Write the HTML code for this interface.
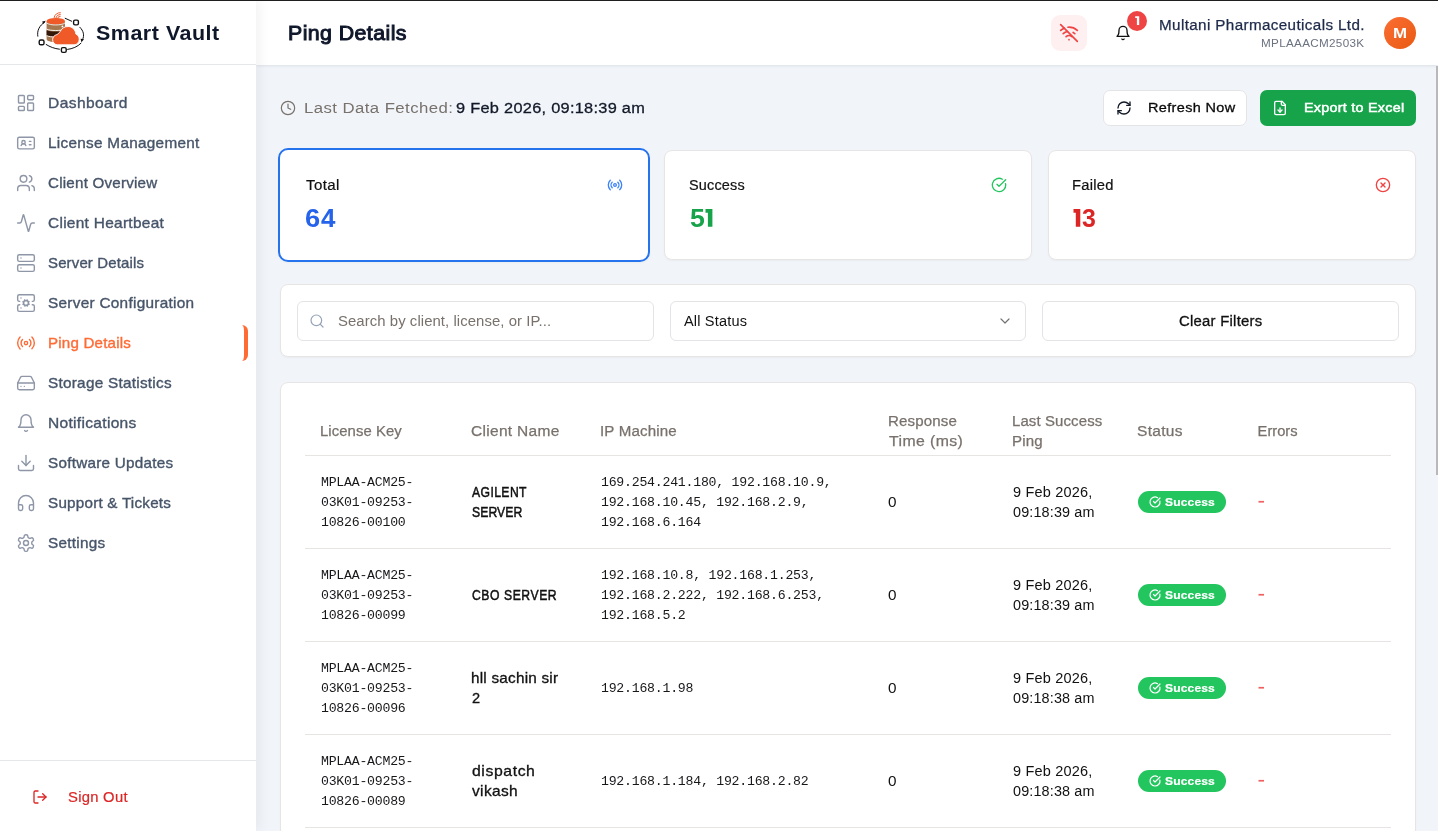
<!DOCTYPE html>
<html lang="en">
<head>
<meta charset="utf-8">
<title>Smart Vault - Ping Details</title>
<style>
*{box-sizing:border-box;margin:0;padding:0}
html,body{width:1438px;height:831px;overflow:hidden}
body{font-family:"Liberation Sans",sans-serif;background:#f1f5f9;color:#111827;position:relative}
svg{display:block;overflow:visible}
.ic{fill:none;stroke:currentColor;stroke-linecap:round;stroke-linejoin:round}
.abs{position:absolute}
.t{position:absolute;white-space:nowrap;line-height:20px}
#root{position:absolute;left:0;top:0;width:1438px;height:831px;will-change:transform}
.card{position:absolute;background:#fff;border:1px solid #e7e5e4;border-radius:8px;box-shadow:0 1px 2px rgba(0,0,0,.04)}
.inp{position:absolute;background:#fff;border:1px solid #e4e4e7;border-radius:6px}
.hl{position:absolute;height:1px;background:#e7e5e4}
</style>
</head>
<body>
<div id="root">
<div id="header" class="abs" style="left:256px;top:0;width:1182px;height:65px;background:#fff;box-shadow:0 1px 3px rgba(15,23,42,.09)"></div>
<div class="t" style="left:287.90px;top:23.07px;font-size:20px;color:#0f172a;letter-spacing:0.40px;-webkit-text-stroke:0.95px #0f172a;transform:scaleX(1.066);transform-origin:0 0">Ping Details</div>
<div class="abs" style="left:1051px;top:15px;width:36px;height:36px;border-radius:9px;background:#fef0f0"></div>
<svg class="ic" viewBox="0 0 24 24" style="position:absolute;left:1059px;top:23px;width:20px;height:20px;color:#ef4444;stroke-width:2;"><path d="M12 20h.01"/><path d="M8.5 16.429a5 5 0 0 1 7 0"/><path d="M5 12.859a10 10 0 0 1 5.17-2.69"/><path d="M19 12.859a10 10 0 0 0-2.007-1.523"/><path d="M2 8.82a15 15 0 0 1 4.177-2.643"/><path d="M22 8.82a15 15 0 0 0-11.288-3.764"/><path d="m2 2 20 20"/></svg>
<svg class="ic" viewBox="0 0 24 24" style="position:absolute;left:1114.9px;top:24.7px;width:16px;height:16px;color:#111;stroke-width:2;"><path d="M6 8a6 6 0 0 1 12 0c0 7 3 9 3 9H3s3-2 3-9"/><path d="M10.3 21a1.94 1.94 0 0 0 3.4 0"/></svg>
<div class="abs" style="left:1127px;top:10.9px;width:20px;height:20px;border-radius:50%;background:#ef4444"></div>
<div class="t" style="left:1159.14px;top:15.15px;font-size:14px;color:#1e2a4a;letter-spacing:0.35px;-webkit-text-stroke:0.25px #1e2a4a;transform:scaleX(1.086);transform-origin:0 0">Multani Pharmaceuticals Ltd.</div>
<div class="t" style="left:1261.12px;top:33.19px;font-size:11px;color:#6b7280;letter-spacing:0.30px;transform:scaleX(1.061);transform-origin:0 0">MPLAAACM2503K</div>
<div class="abs" style="left:1384px;top:17px;width:32px;height:32px;border-radius:50%;background:linear-gradient(135deg,#fb6e33,#e95a12)"></div>
<div class="t" style="left:1392.97px;top:23.35px;font-size:14px;color:#fff;letter-spacing:0.00px;font-weight:700;transform:scaleX(1.205);transform-origin:0 0">M</div>
<div id="sidebar" class="abs" style="left:0;top:0;width:256px;height:831px;background:#fff;box-shadow:3px 0 12px rgba(15,23,42,.06)"></div>
<div class="hl" style="left:0;top:64px;width:256px;background:#e5e7eb"></div>
<div class="hl" style="left:0;top:760px;width:256px;background:#e5e7eb"></div>
    <svg id="logo" class="abs" style="left:30px;top:5px;width:70px;height:55px" viewBox="30 5 70 55">
      <!-- orbit -->
      <g fill="none" stroke="#111" stroke-width="1" stroke-linecap="round">
        <path d="M44.6 22.2 C39.5 25.5 36.8 30.5 37.8 36.2"/>
        <path d="M65.2 18.3 L71.6 21.2"/>
        <path d="M79.8 27.2 C83.6 31 84.6 35.2 82.6 39.6"/>
        <path d="M81 43.2 C77.5 46.8 72.5 48.8 67.6 49.4"/>
        <path d="M59.4 49.2 C54.4 48.6 49.8 46.9 46.2 44.5"/>
      </g>
      <path d="M45.9 20.8 L43.2 24 L42.2 21.5 Z" fill="#111"/>
      <path d="M84 39.2 L81.4 42.2 L80.6 38.8 Z" fill="#111"/>
      <g fill="#fff" stroke="#111" stroke-width="1.4">
        <rect x="73.6" y="20.1" width="4.8" height="4.8" rx="1.4"/>
        <rect x="39.2" y="40" width="4.8" height="4.8" rx="1.6"/>
        <rect x="61.4" y="47.6" width="4.8" height="4.8" rx="1.4"/>
      </g>
      <!-- wifi -->
      <g fill="none" stroke="#f05a28" stroke-width="1" stroke-linecap="round">
        <path d="M54.1 17.6 A5.7 5.7 0 0 1 60.4 12.7"/>
        <path d="M55.9 18.1 A3.9 3.9 0 0 1 60.3 14.6"/>
        <path d="M57.6 18.4 A2.2 2.2 0 0 1 60.1 16.4"/>
      </g>
      <!-- cylinder -->
      <path d="M46.6 22 V39 C46.6 43.2 65 43.2 65 39 V22 Z" fill="#a67850"/>
      <path d="M46.6 30.2 C50 32 61.6 32 65 30.2 V35.4 C61.6 37.2 50 37.2 46.6 35.4 Z" fill="#33180a"/>
      <path d="M46.6 29.1 C50 31 61.6 31 65 29.1" fill="none" stroke="#fff" stroke-width=".9"/>
      <path d="M46.6 35.6 C50 37.5 61.6 37.5 65 35.6" fill="none" stroke="#fff" stroke-width=".9"/>
      <ellipse cx="55.8" cy="21.2" rx="9.2" ry="3.3" fill="#f05a28"/>
      <path d="M46.6 23 C50 25.6 61.6 25.6 65 23" fill="none" stroke="#fff" stroke-width=".8"/>
      <circle cx="62.4" cy="26.4" r=".9" fill="#fff"/>
      <!-- cloud -->
      <path d="M57.6 44.8 C54.6 44.8 52.6 42.4 52.6 39.8 C52.6 37.2 54.4 35.2 56.8 34.6 C58.2 34 59.4 32.6 60.4 31.2 C61.6 28.4 64.6 26.5 68 26.5 C72.2 26.5 75.6 29.8 75.8 34 C77.8 34.8 79.2 36.8 79.2 39.2 C79.2 42.4 77 44.8 74 44.8 Z" fill="#f05a28" stroke="#fff" stroke-width=".9"/>
    </svg>

<div class="t" style="left:95.71px;top:23.07px;font-size:20px;color:#0f172a;letter-spacing:0.49px;font-weight:700;transform:scaleX(1.072);transform-origin:0 0">Smart Vault</div>
<svg class="ic" viewBox="0 0 24 24" style="position:absolute;left:16px;top:93px;width:20px;height:20px;color:#8e96a7;stroke-width:1.7;"><rect width="7" height="9" x="3" y="3" rx="1"/><rect width="7" height="5" x="14" y="3" rx="1"/><rect width="7" height="9" x="14" y="12" rx="1"/><rect width="7" height="5" x="3" y="16" rx="1"/></svg>
<div class="t" style="left:47.65px;top:92.98px;font-size:14.5px;color:#475569;letter-spacing:0.39px;-webkit-text-stroke:0.35px #475569;transform:scaleX(1.072);transform-origin:0 0">Dashboard</div>
<svg class="ic" viewBox="0 0 24 24" style="position:absolute;left:16px;top:133px;width:20px;height:20px;color:#8e96a7;stroke-width:1.7;"><path d="M16 10h2"/><path d="M16 14h2"/><path d="M6.17 15a3 3 0 0 1 5.66 0"/><circle cx="9" cy="11" r="2"/><rect x="2" y="5" width="20" height="14" rx="2"/></svg>
<div class="t" style="left:47.67px;top:132.98px;font-size:14.5px;color:#475569;letter-spacing:0.28px;-webkit-text-stroke:0.35px #475569;transform:scaleX(1.055);transform-origin:0 0">License Management</div>
<svg class="ic" viewBox="0 0 24 24" style="position:absolute;left:16px;top:173px;width:20px;height:20px;color:#8e96a7;stroke-width:1.7;"><path d="M16 21v-2a4 4 0 0 0-4-4H6a4 4 0 0 0-4 4v2"/><circle cx="9" cy="7" r="4"/><path d="M22 21v-2a4 4 0 0 0-3-3.87"/><path d="M16 3.13a4 4 0 0 1 0 7.75"/></svg>
<div class="t" style="left:47.97px;top:172.98px;font-size:14.5px;color:#475569;letter-spacing:0.21px;-webkit-text-stroke:0.35px #475569;transform:scaleX(1.045);transform-origin:0 0">Client Overview</div>
<svg class="ic" viewBox="0 0 24 24" style="position:absolute;left:16px;top:213px;width:20px;height:20px;color:#8e96a7;stroke-width:1.7;"><path d="M22 12h-2.48a2 2 0 0 0-1.93 1.46l-2.35 8.36a.25.25 0 0 1-.48 0L9.24 2.18a.25.25 0 0 0-.48 0l-2.35 8.36A2 2 0 0 1 4.49 12H2"/></svg>
<div class="t" style="left:47.96px;top:212.98px;font-size:14.5px;color:#475569;letter-spacing:0.28px;-webkit-text-stroke:0.35px #475569;transform:scaleX(1.063);transform-origin:0 0">Client Heartbeat</div>
<svg class="ic" viewBox="0 0 24 24" style="position:absolute;left:16px;top:253px;width:20px;height:20px;color:#8e96a7;stroke-width:1.7;"><rect width="20" height="8" x="2" y="2" rx="2" ry="2"/><rect width="20" height="8" x="2" y="14" rx="2" ry="2"/><line x1="6" x2="6.01" y1="6" y2="6"/><line x1="6" x2="6.01" y1="18" y2="18"/></svg>
<div class="t" style="left:47.98px;top:252.98px;font-size:14.5px;color:#475569;letter-spacing:0.15px;-webkit-text-stroke:0.35px #475569;transform:scaleX(1.032);transform-origin:0 0">Server Details</div>
<svg class="ic" viewBox="0 0 24 24" style="position:absolute;left:16px;top:293px;width:20px;height:20px;color:#8e96a7;stroke-width:1.7;"><circle cx="12" cy="12" r="3"/><path d="M4.5 10H4a2 2 0 0 1-2-2V4a2 2 0 0 1 2-2h16a2 2 0 0 1 2 2v4a2 2 0 0 1-2 2h-.5"/><path d="M4.5 14H4a2 2 0 0 0-2 2v4a2 2 0 0 0 2 2h16a2 2 0 0 0 2-2v-4a2 2 0 0 0-2-2h-.5"/><path d="M6 6h.01"/><path d="M6 18h.01"/><path d="m15.7 13.4-.9-.3"/><path d="m9.2 10.9-.9-.3"/><path d="m10.6 15.7.3-.9"/><path d="m13.6 15.7-.4-1"/><path d="m10.8 9.3-.4-1"/><path d="m8.3 13.6 1-.4"/><path d="m14.7 10.8 1-.4"/><path d="m13.4 8.3-.3.9"/></svg>
<div class="t" style="left:47.96px;top:292.98px;font-size:14.5px;color:#475569;letter-spacing:0.26px;-webkit-text-stroke:0.35px #475569;transform:scaleX(1.059);transform-origin:0 0">Server Configuration</div>
<div class="abs" style="left:8px;top:325px;width:240px;height:36px;border-right:4px solid #ff6b35;border-radius:0 6px 6px 0"></div>
<svg class="ic" viewBox="0 0 24 24" style="position:absolute;left:16px;top:333px;width:20px;height:20px;color:#ff6b35;stroke-width:1.7;"><path d="M4.9 19.1C1 15.2 1 8.8 4.9 4.9"/><path d="M7.8 16.2c-2.3-2.3-2.3-6.1 0-8.5"/><circle cx="12" cy="12" r="2"/><path d="M16.2 7.8c2.3 2.3 2.3 6.1 0 8.5"/><path d="M19.1 4.9C23 8.8 23 15.1 19.1 19"/></svg>
<div class="t" style="left:47.68px;top:332.98px;font-size:14.5px;color:#ff6b35;letter-spacing:0.19px;-webkit-text-stroke:0.35px #ff6b35;transform:scaleX(1.043);transform-origin:0 0">Ping Details</div>
<svg class="ic" viewBox="0 0 24 24" style="position:absolute;left:16px;top:373px;width:20px;height:20px;color:#8e96a7;stroke-width:1.7;"><line x1="22" x2="2" y1="12" y2="12"/><path d="M5.45 5.11 2 12v6a2 2 0 0 0 2 2h16a2 2 0 0 0 2-2v-6l-3.45-6.89A2 2 0 0 0 16.76 4H7.24a2 2 0 0 0-1.79 1.11z"/><line x1="6" x2="6.01" y1="16" y2="16"/><line x1="10" x2="10.01" y1="16" y2="16"/></svg>
<div class="t" style="left:47.97px;top:372.98px;font-size:14.5px;color:#475569;letter-spacing:0.24px;-webkit-text-stroke:0.35px #475569;transform:scaleX(1.057);transform-origin:0 0">Storage Statistics</div>
<svg class="ic" viewBox="0 0 24 24" style="position:absolute;left:16px;top:413px;width:20px;height:20px;color:#8e96a7;stroke-width:1.7;"><path d="M6 8a6 6 0 0 1 12 0c0 7 3 9 3 9H3s3-2 3-9"/><path d="M10.3 21a1.94 1.94 0 0 0 3.4 0"/></svg>
<div class="t" style="left:47.65px;top:412.98px;font-size:14.5px;color:#475569;letter-spacing:0.29px;-webkit-text-stroke:0.35px #475569;transform:scaleX(1.071);transform-origin:0 0">Notifications</div>
<svg class="ic" viewBox="0 0 24 24" style="position:absolute;left:16px;top:453px;width:20px;height:20px;color:#8e96a7;stroke-width:1.7;"><path d="M21 15v4a2 2 0 0 1-2 2H5a2 2 0 0 1-2-2v-4"/><polyline points="7 10 12 15 17 10"/><line x1="12" x2="12" y1="15" y2="3"/></svg>
<div class="t" style="left:47.97px;top:452.98px;font-size:14.5px;color:#475569;letter-spacing:0.25px;-webkit-text-stroke:0.35px #475569;transform:scaleX(1.051);transform-origin:0 0">Software Updates</div>
<svg class="ic" viewBox="0 0 24 24" style="position:absolute;left:16px;top:493px;width:20px;height:20px;color:#8e96a7;stroke-width:1.7;"><path d="M3 14h3a2 2 0 0 1 2 2v3a2 2 0 0 1-2 2H5a2 2 0 0 1-2-2v-7a9 9 0 0 1 18 0v7a2 2 0 0 1-2 2h-1a2 2 0 0 1-2-2v-3a2 2 0 0 1 2-2h3"/></svg>
<div class="t" style="left:47.97px;top:492.98px;font-size:14.5px;color:#475569;letter-spacing:0.22px;-webkit-text-stroke:0.35px #475569;transform:scaleX(1.049);transform-origin:0 0">Support &amp; Tickets</div>
<svg class="ic" viewBox="0 0 24 24" style="position:absolute;left:16px;top:533px;width:20px;height:20px;color:#8e96a7;stroke-width:1.7;"><path d="M12.22 2h-.44a2 2 0 0 0-2 2v.18a2 2 0 0 1-1 1.73l-.43.25a2 2 0 0 1-2 0l-.15-.08a2 2 0 0 0-2.73.73l-.22.38a2 2 0 0 0 .73 2.73l.15.1a2 2 0 0 1 1 1.72v.51a2 2 0 0 1-1 1.74l-.15.09a2 2 0 0 0-.73 2.73l.22.38a2 2 0 0 0 2.73.73l.15-.08a2 2 0 0 1 2 0l.43.25a2 2 0 0 1 1 1.73V20a2 2 0 0 0 2 2h.44a2 2 0 0 0 2-2v-.18a2 2 0 0 1 1-1.73l.43-.25a2 2 0 0 1 2 0l.15.08a2 2 0 0 0 2.73-.73l.22-.39a2 2 0 0 0-.73-2.73l-.15-.08a2 2 0 0 1-1-1.74v-.5a2 2 0 0 1 1-1.74l.15-.09a2 2 0 0 0 .73-2.73l-.22-.38a2 2 0 0 0-2.73-.73l-.15.08a2 2 0 0 1-2 0l-.43-.25a2 2 0 0 1-1-1.73V4a2 2 0 0 0-2-2z"/><circle cx="12" cy="12" r="3"/></svg>
<div class="t" style="left:47.97px;top:532.98px;font-size:14.5px;color:#475569;letter-spacing:0.26px;-webkit-text-stroke:0.35px #475569;transform:scaleX(1.055);transform-origin:0 0">Settings</div>
<svg class="ic" viewBox="0 0 24 24" style="position:absolute;left:31.8px;top:788.5px;width:16px;height:16px;color:#dc2626;stroke-width:2;"><path d="M9 21H5a2 2 0 0 1-2-2V5a2 2 0 0 1 2-2h4"/><polyline points="16 17 21 12 16 7"/><line x1="21" x2="9" y1="12" y2="12"/></svg>
<div class="t" style="left:67.77px;top:787.15px;font-size:14px;color:#dc2626;letter-spacing:0.27px;-webkit-text-stroke:0.2px #dc2626;transform:scaleX(1.056);transform-origin:0 0">Sign Out</div>
<svg class="ic" viewBox="0 0 24 24" style="position:absolute;left:280px;top:100px;width:16px;height:16px;color:#78716c;stroke-width:1.8;"><circle cx="12" cy="12" r="10"/><polyline points="12 6 12 12 16 14"/></svg>
<div class="t" style="left:303.56px;top:97.63px;font-size:15.5px;color:#78716c;letter-spacing:0.39px;transform:scaleX(1.082);transform-origin:0 0">Last Data Fetched:</div>
<div class="t" style="left:456.03px;top:97.63px;font-size:15.5px;color:#111827;letter-spacing:0.27px;-webkit-text-stroke:0.3px #111827;transform:scaleX(1.054);transform-origin:0 0">9 Feb 2026, 09:18:39 am</div>
<div class="abs" style="left:1103px;top:90px;width:144px;height:36px;border:1px solid #e4e4e7;border-radius:7px;background:#fff"></div>
<svg class="ic" viewBox="0 0 24 24" style="position:absolute;left:1116px;top:100px;width:16px;height:16px;color:#111827;stroke-width:2;"><path d="M3 12a9 9 0 0 1 9-9 9.75 9.75 0 0 1 6.74 2.74L21 8"/><path d="M21 3v5h-5"/><path d="M21 12a9 9 0 0 1-9 9 9.75 9.75 0 0 1-6.74-2.74L3 16"/><path d="M8 16H3v5"/></svg>
<div class="t" style="left:1147.68px;top:98.42px;font-size:13.5px;color:#0a0a0a;letter-spacing:0.34px;-webkit-text-stroke:0.3px #0a0a0a;transform:scaleX(1.070);transform-origin:0 0">Refresh Now</div>
<div class="abs" style="left:1260px;top:90px;width:156px;height:36px;border-radius:7px;background:#16a34a"></div>
<svg class="ic" viewBox="0 0 24 24" style="position:absolute;left:1272px;top:99.5px;width:16px;height:16px;color:#fff;stroke-width:2;"><path d="M15 2H6a2 2 0 0 0-2 2v16a2 2 0 0 0 2 2h12a2 2 0 0 0 2-2V7Z"/><path d="M14 2v4a2 2 0 0 0 2 2h4"/><path d="M12 18v-6"/><path d="m9 15 3 3 3-3"/></svg>
<div class="t" style="left:1303.76px;top:98.42px;font-size:13.5px;color:#fff;letter-spacing:0.25px;-webkit-text-stroke:0.5px #fff;transform:scaleX(1.062);transform-origin:0 0">Export to Excel</div>
<div class="card" style="left:278px;top:148px;width:372px;height:114px;border:2px solid #2673ee;border-radius:10px"></div>
<div class="card" style="left:664px;top:150px;width:368px;height:110px"></div>
<div class="card" style="left:1048px;top:150px;width:368px;height:110px"></div>
<svg class="abs" style="left:0;top:0;width:1438px;height:831px;pointer-events:none" viewBox="0 0 1438 831"><polygon fill="#fff" points="1135.2,16.2 1139.2,16.2 1139.2,24.9 1136.9,24.9 1136.9,18 1135.2,18"/></svg>
<div class="t" style="left:305.65px;top:175.15px;font-size:14px;color:#111;letter-spacing:0.34px;-webkit-text-stroke:0.2px #111;transform:scaleX(1.076);transform-origin:0 0">Total</div>
<div class="t" style="left:688.59px;top:175.15px;font-size:14px;color:#111;letter-spacing:0.17px;-webkit-text-stroke:0.2px #111;transform:scaleX(1.031);transform-origin:0 0">Success</div>
<div class="t" style="left:1072.46px;top:175.15px;font-size:14px;color:#111;letter-spacing:0.24px;-webkit-text-stroke:0.2px #111;transform:scaleX(1.052);transform-origin:0 0">Failed</div>
<div class="t" style="left:305.17px;top:208.34px;font-size:25px;color:#2563eb;letter-spacing:0.00px;font-weight:700;transform:scaleX(1.090);transform-origin:0 0">6</div>
<div class="t" style="left:321.21px;top:208.34px;font-size:25px;color:#2563eb;letter-spacing:0.00px;font-weight:700;transform:scaleX(1.037);transform-origin:0 0">4</div>
<div class="t" style="left:689.59px;top:208.34px;font-size:25px;color:#16a34a;letter-spacing:0.00px;font-weight:700;transform:scaleX(1.069);transform-origin:0 0">5</div>
<div class="t" style="left:1082.29px;top:208.34px;font-size:25px;color:#dc2626;letter-spacing:0.00px;font-weight:700;transform:scaleX(0.997);transform-origin:0 0">3</div>
<svg class="abs" style="left:0;top:0;width:1438px;height:831px;pointer-events:none" viewBox="0 0 1438 831"><polygon fill="#16a34a" points="705.5,209.1 712.4,209.1 712.4,226.8 707.9,226.8 707.9,212.8 705.5,212.8"/></svg>
<svg class="abs" style="left:0;top:0;width:1438px;height:831px;pointer-events:none" viewBox="0 0 1438 831"><polygon fill="#dc2626" points="1073.5,209.1 1080.3,209.1 1080.3,226.8 1075.8,226.8 1075.8,212.8 1073.5,212.8"/></svg>
<svg class="ic" viewBox="0 0 24 24" style="position:absolute;left:607px;top:177.2px;width:16px;height:16px;color:#3b82f6;stroke-width:2;"><path d="M4.9 19.1C1 15.2 1 8.8 4.9 4.9"/><path d="M7.8 16.2c-2.3-2.3-2.3-6.1 0-8.5"/><circle cx="12" cy="12" r="2"/><path d="M16.2 7.8c2.3 2.3 2.3 6.1 0 8.5"/><path d="M19.1 4.9C23 8.8 23 15.1 19.1 19"/></svg>
<svg class="ic" viewBox="0 0 24 24" style="position:absolute;left:991px;top:176.6px;width:16px;height:16px;color:#22c55e;stroke-width:2;"><path d="M21.801 10A10 10 0 1 1 17 3.335"/><path d="m9 11 3 3L22 4"/></svg>
<svg class="ic" viewBox="0 0 24 24" style="position:absolute;left:1375px;top:177.2px;width:16px;height:16px;color:#ef4444;stroke-width:2;"><circle cx="12" cy="12" r="10"/><path d="m15 9-6 6"/><path d="m9 9 6 6"/></svg>
<div class="card" style="left:280px;top:284px;width:1136px;height:73px"></div>
<div class="inp" style="left:297px;top:301px;width:356.5px;height:40px"></div>
<div class="inp" style="left:670px;top:301px;width:356px;height:40px"></div>
<div class="inp" style="left:1042.4px;top:301px;width:356.4px;height:40px"></div>
<svg class="ic" viewBox="0 0 24 24" style="position:absolute;left:308.7px;top:313.3px;width:16px;height:16px;color:#94a3b8;stroke-width:1.8;"><circle cx="11" cy="11" r="8"/><path d="m21 21-4.3-4.3"/></svg>
<div class="t" style="left:337.50px;top:311.41px;font-size:14.7px;color:#78716c;letter-spacing:0.06px;transform:scaleX(1.015);transform-origin:0 0">Search by client, license, or IP...</div>
<div class="t" style="left:683.54px;top:311.15px;font-size:14px;color:#111;letter-spacing:0.16px;transform:scaleX(1.039);transform-origin:0 0">All Status</div>
<svg class="ic" viewBox="0 0 24 24" style="position:absolute;left:997px;top:313.1px;width:16px;height:16px;color:#737373;stroke-width:1.8;"><path d="m6 9 6 6 6-6"/></svg>
<div class="t" style="left:1178.85px;top:311.15px;font-size:14px;color:#111;letter-spacing:0.24px;-webkit-text-stroke:0.3px #111;transform:scaleX(1.062);transform-origin:0 0">Clear Filters</div>
<div class="card" style="left:280px;top:382px;width:1136px;height:470px"></div>
<div class="hl" style="left:305px;top:455px;width:1086px"></div>
<div class="t" style="left:320.48px;top:420.91px;font-size:14.7px;color:#78716c;letter-spacing:0.07px;-webkit-text-stroke:0.25px #78716c;transform:scaleX(1.013);transform-origin:0 0">License Key</div>
<div class="t" style="left:471.31px;top:420.91px;font-size:14.7px;color:#78716c;letter-spacing:0.28px;-webkit-text-stroke:0.25px #78716c;transform:scaleX(1.056);transform-origin:0 0">Client Name</div>
<div class="t" style="left:600.22px;top:420.91px;font-size:14.7px;color:#78716c;letter-spacing:0.15px;-webkit-text-stroke:0.25px #78716c;transform:scaleX(1.029);transform-origin:0 0">IP Machine</div>
<div class="t" style="left:887.67px;top:410.91px;font-size:14.7px;color:#78716c;letter-spacing:0.15px;-webkit-text-stroke:0.25px #78716c;transform:scaleX(1.026);transform-origin:0 0">Response</div>
<div class="t" style="left:888.65px;top:430.91px;font-size:14.7px;color:#78716c;letter-spacing:0.38px;-webkit-text-stroke:0.25px #78716c;transform:scaleX(1.076);transform-origin:0 0">Time (ms)</div>
<div class="t" style="left:1012.48px;top:410.91px;font-size:14.7px;color:#78716c;letter-spacing:0.10px;-webkit-text-stroke:0.25px #78716c;transform:scaleX(1.020);transform-origin:0 0">Last Success</div>
<div class="t" style="left:1012.47px;top:430.91px;font-size:14.7px;color:#78716c;letter-spacing:0.17px;-webkit-text-stroke:0.25px #78716c;transform:scaleX(1.027);transform-origin:0 0">Ping</div>
<div class="t" style="left:1137.18px;top:420.91px;font-size:14.7px;color:#78716c;letter-spacing:0.29px;-webkit-text-stroke:0.25px #78716c;transform:scaleX(1.056);transform-origin:0 0">Status</div>
<div class="t" style="left:1257.59px;top:420.91px;font-size:14.7px;color:#78716c;letter-spacing:0.01px;-webkit-text-stroke:0.25px #78716c">Errors</div>
<div class="hl" style="left:305px;top:548px;width:1086px"></div>
<div class="t" style="left:321.00px;top:473.49px;font-size:13.2px;color:#18181b;letter-spacing:-0.23px;font-family:'Liberation Mono',monospace">MPLAA-ACM25-</div>
<div class="t" style="left:321.00px;top:493.49px;font-size:13.2px;color:#18181b;letter-spacing:-0.23px;font-family:'Liberation Mono',monospace">03K01-09253-</div>
<div class="t" style="left:321.00px;top:513.49px;font-size:13.2px;color:#18181b;letter-spacing:-0.23px;font-family:'Liberation Mono',monospace">10826-00100</div>
<div class="t" style="left:472.43px;top:481.98px;font-size:14.5px;color:#111;letter-spacing:0.48px;-webkit-text-stroke:0.5px #111;transform:scaleX(0.840);transform-origin:0 0">AGILENT</div>
<div class="t" style="left:471.84px;top:501.98px;font-size:14.5px;color:#111;letter-spacing:0.10px;-webkit-text-stroke:0.5px #111;transform:scaleX(0.840);transform-origin:0 0">SERVER</div>
<div class="t" style="left:601.00px;top:473.49px;font-size:13.2px;color:#18181b;letter-spacing:-0.23px;font-family:'Liberation Mono',monospace">169.254.241.180, 192.168.10.9,</div>
<div class="t" style="left:601.00px;top:493.49px;font-size:13.2px;color:#18181b;letter-spacing:-0.23px;font-family:'Liberation Mono',monospace">192.168.10.45, 192.168.2.9,</div>
<div class="t" style="left:601.00px;top:513.49px;font-size:13.2px;color:#18181b;letter-spacing:-0.23px;font-family:'Liberation Mono',monospace">192.168.6.164</div>
<div class="t" style="left:888.26px;top:491.98px;font-size:14.5px;color:#111;letter-spacing:0.00px;transform:scaleX(1.054);transform-origin:0 0">0</div>
<div class="t" style="left:1012.74px;top:482.15px;font-size:14px;color:#111;letter-spacing:0.17px;transform:scaleX(1.036);transform-origin:0 0">9 Feb 2026,</div>
<div class="t" style="left:1012.88px;top:502.15px;font-size:14px;color:#111;letter-spacing:0.14px;transform:scaleX(1.028);transform-origin:0 0">09:18:39 am</div>
<div class="abs" style="left:1138px;top:491px;width:88px;height:22px;border-radius:11px;background:#22c55e"></div>
<svg class="ic" viewBox="0 0 24 24" style="position:absolute;left:1148.7px;top:495.8px;width:12px;height:12px;color:#fff;stroke-width:2.4;"><path d="M21.801 10A10 10 0 1 1 17 3.335"/><path d="m9 11 3 3L22 4"/></svg>
<div class="t" style="left:1164.91px;top:491.95px;font-size:11.7px;color:#fff;letter-spacing:0.15px;font-weight:700;-webkit-text-stroke:0.2px #fff;transform:scaleX(1.030);transform-origin:0 0">Success</div>
<svg class="abs" style="left:1250px;top:497px;width:20px;height:10px" viewBox="0 0 20 10"><rect x="8.5" y="3.9" width="5.5" height="1.7" fill="#ef6060"/></svg>
<div class="hl" style="left:305px;top:641px;width:1086px"></div>
<div class="t" style="left:321.00px;top:566.49px;font-size:13.2px;color:#18181b;letter-spacing:-0.23px;font-family:'Liberation Mono',monospace">MPLAA-ACM25-</div>
<div class="t" style="left:321.00px;top:586.49px;font-size:13.2px;color:#18181b;letter-spacing:-0.23px;font-family:'Liberation Mono',monospace">03K01-09253-</div>
<div class="t" style="left:321.00px;top:606.49px;font-size:13.2px;color:#18181b;letter-spacing:-0.23px;font-family:'Liberation Mono',monospace">10826-00099</div>
<div class="t" style="left:471.86px;top:584.98px;font-size:14.5px;color:#111;letter-spacing:0.66px;-webkit-text-stroke:0.5px #111;transform:scaleX(0.840);transform-origin:0 0">CBO SERVER</div>
<div class="t" style="left:601.00px;top:566.49px;font-size:13.2px;color:#18181b;letter-spacing:-0.23px;font-family:'Liberation Mono',monospace">192.168.10.8, 192.168.1.253,</div>
<div class="t" style="left:601.00px;top:586.49px;font-size:13.2px;color:#18181b;letter-spacing:-0.23px;font-family:'Liberation Mono',monospace">192.168.2.222, 192.168.6.253,</div>
<div class="t" style="left:601.00px;top:606.49px;font-size:13.2px;color:#18181b;letter-spacing:-0.23px;font-family:'Liberation Mono',monospace">192.168.5.2</div>
<div class="t" style="left:888.26px;top:584.98px;font-size:14.5px;color:#111;letter-spacing:0.00px;transform:scaleX(1.054);transform-origin:0 0">0</div>
<div class="t" style="left:1012.74px;top:575.15px;font-size:14px;color:#111;letter-spacing:0.17px;transform:scaleX(1.036);transform-origin:0 0">9 Feb 2026,</div>
<div class="t" style="left:1012.88px;top:595.15px;font-size:14px;color:#111;letter-spacing:0.14px;transform:scaleX(1.028);transform-origin:0 0">09:18:39 am</div>
<div class="abs" style="left:1138px;top:584px;width:88px;height:22px;border-radius:11px;background:#22c55e"></div>
<svg class="ic" viewBox="0 0 24 24" style="position:absolute;left:1148.7px;top:588.8px;width:12px;height:12px;color:#fff;stroke-width:2.4;"><path d="M21.801 10A10 10 0 1 1 17 3.335"/><path d="m9 11 3 3L22 4"/></svg>
<div class="t" style="left:1164.91px;top:584.95px;font-size:11.7px;color:#fff;letter-spacing:0.15px;font-weight:700;-webkit-text-stroke:0.2px #fff;transform:scaleX(1.030);transform-origin:0 0">Success</div>
<svg class="abs" style="left:1250px;top:590px;width:20px;height:10px" viewBox="0 0 20 10"><rect x="8.5" y="3.9" width="5.5" height="1.7" fill="#ef6060"/></svg>
<div class="hl" style="left:305px;top:734px;width:1086px"></div>
<div class="t" style="left:321.00px;top:659.49px;font-size:13.2px;color:#18181b;letter-spacing:-0.23px;font-family:'Liberation Mono',monospace">MPLAA-ACM25-</div>
<div class="t" style="left:321.00px;top:679.49px;font-size:13.2px;color:#18181b;letter-spacing:-0.23px;font-family:'Liberation Mono',monospace">03K01-09253-</div>
<div class="t" style="left:321.00px;top:699.49px;font-size:13.2px;color:#18181b;letter-spacing:-0.23px;font-family:'Liberation Mono',monospace">10826-00096</div>
<div class="t" style="left:471.47px;top:667.98px;font-size:14.5px;color:#111;letter-spacing:0.21px;-webkit-text-stroke:0.3px #111;transform:scaleX(1.055);transform-origin:0 0">hll sachin sir</div>
<div class="t" style="left:471.73px;top:687.98px;font-size:14.5px;color:#111;letter-spacing:0.00px;-webkit-text-stroke:0.3px #111;transform:scaleX(1.008);transform-origin:0 0">2</div>
<div class="t" style="left:601.00px;top:679.49px;font-size:13.2px;color:#18181b;letter-spacing:-0.23px;font-family:'Liberation Mono',monospace">192.168.1.98</div>
<div class="t" style="left:888.26px;top:677.98px;font-size:14.5px;color:#111;letter-spacing:0.00px;transform:scaleX(1.054);transform-origin:0 0">0</div>
<div class="t" style="left:1012.74px;top:668.15px;font-size:14px;color:#111;letter-spacing:0.17px;transform:scaleX(1.036);transform-origin:0 0">9 Feb 2026,</div>
<div class="t" style="left:1012.88px;top:688.15px;font-size:14px;color:#111;letter-spacing:0.14px;transform:scaleX(1.028);transform-origin:0 0">09:18:38 am</div>
<div class="abs" style="left:1138px;top:677px;width:88px;height:22px;border-radius:11px;background:#22c55e"></div>
<svg class="ic" viewBox="0 0 24 24" style="position:absolute;left:1148.7px;top:681.8px;width:12px;height:12px;color:#fff;stroke-width:2.4;"><path d="M21.801 10A10 10 0 1 1 17 3.335"/><path d="m9 11 3 3L22 4"/></svg>
<div class="t" style="left:1164.91px;top:677.95px;font-size:11.7px;color:#fff;letter-spacing:0.15px;font-weight:700;-webkit-text-stroke:0.2px #fff;transform:scaleX(1.030);transform-origin:0 0">Success</div>
<svg class="abs" style="left:1250px;top:683px;width:20px;height:10px" viewBox="0 0 20 10"><rect x="8.5" y="3.9" width="5.5" height="1.7" fill="#ef6060"/></svg>
<div class="hl" style="left:305px;top:827px;width:1086px"></div>
<div class="t" style="left:321.00px;top:752.49px;font-size:13.2px;color:#18181b;letter-spacing:-0.23px;font-family:'Liberation Mono',monospace">MPLAA-ACM25-</div>
<div class="t" style="left:321.00px;top:772.49px;font-size:13.2px;color:#18181b;letter-spacing:-0.23px;font-family:'Liberation Mono',monospace">03K01-09253-</div>
<div class="t" style="left:321.00px;top:792.49px;font-size:13.2px;color:#18181b;letter-spacing:-0.23px;font-family:'Liberation Mono',monospace">10826-00089</div>
<div class="t" style="left:471.72px;top:760.98px;font-size:14.5px;color:#111;letter-spacing:0.53px;-webkit-text-stroke:0.3px #111;transform:scaleX(1.090);transform-origin:0 0">dispatch</div>
<div class="t" style="left:472.40px;top:780.98px;font-size:14.5px;color:#111;letter-spacing:0.34px;-webkit-text-stroke:0.3px #111;transform:scaleX(1.068);transform-origin:0 0">vikash</div>
<div class="t" style="left:601.00px;top:772.49px;font-size:13.2px;color:#18181b;letter-spacing:-0.23px;font-family:'Liberation Mono',monospace">192.168.1.184, 192.168.2.82</div>
<div class="t" style="left:888.26px;top:770.98px;font-size:14.5px;color:#111;letter-spacing:0.00px;transform:scaleX(1.054);transform-origin:0 0">0</div>
<div class="t" style="left:1012.74px;top:761.15px;font-size:14px;color:#111;letter-spacing:0.17px;transform:scaleX(1.036);transform-origin:0 0">9 Feb 2026,</div>
<div class="t" style="left:1012.88px;top:781.15px;font-size:14px;color:#111;letter-spacing:0.14px;transform:scaleX(1.028);transform-origin:0 0">09:18:38 am</div>
<div class="abs" style="left:1138px;top:770px;width:88px;height:22px;border-radius:11px;background:#22c55e"></div>
<svg class="ic" viewBox="0 0 24 24" style="position:absolute;left:1148.7px;top:774.8px;width:12px;height:12px;color:#fff;stroke-width:2.4;"><path d="M21.801 10A10 10 0 1 1 17 3.335"/><path d="m9 11 3 3L22 4"/></svg>
<div class="t" style="left:1164.91px;top:770.95px;font-size:11.7px;color:#fff;letter-spacing:0.15px;font-weight:700;-webkit-text-stroke:0.2px #fff;transform:scaleX(1.030);transform-origin:0 0">Success</div>
<svg class="abs" style="left:1250px;top:776px;width:20px;height:10px" viewBox="0 0 20 10"><rect x="8.5" y="3.9" width="5.5" height="1.7" fill="#ef6060"/></svg>
<div class="abs" style="left:0;top:0;width:1438px;height:1px;background:#1f1f1f"></div>
<div class="abs" style="left:1436px;top:66px;width:2px;height:409px;background:#b8b8b8"></div>
</div>
</body>
</html>
